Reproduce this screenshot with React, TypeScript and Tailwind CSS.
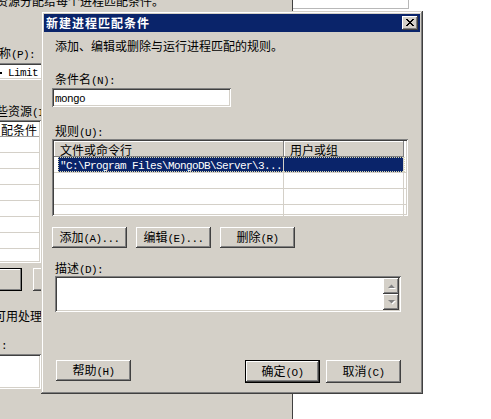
import React from "react";

const raised =
  "shadow-[inset_-1px_-1px_#404040,inset_1px_1px_#ffffff,inset_-2px_-2px_#808080,inset_2px_2px_#d4d0c8]";
const sunken =
  "shadow-[inset_1px_1px_#808080,inset_-1px_-1px_#ffffff,inset_2px_2px_#404040,inset_-2px_-2px_#d4d0c8]";
const winFrame =
  "shadow-[inset_-1px_-1px_#404040,inset_1px_1px_#d4d0c8,inset_-2px_-2px_#808080,inset_2px_2px_#ffffff]";

// SimSun-like mix: CJK at 12px, latin half-width at 6px per char
function T({ s, className = "" }: { s: string; className?: string }) {
  const parts = s.match(/[\x00-\x7f]+|[^\x00-\x7f]+/g) ?? [];
  return (
    <span className={`whitespace-pre leading-[12px] ${className}`}>
      {parts.map((p, i) =>
        /^[\x00-\x7f]/.test(p) ? (
          <span key={i} className="font-['Liberation_Mono',monospace] text-[11px] tracking-[-0.6px]">
            {p}
          </span>
        ) : (
          <span key={i} className="font-['Noto_Sans_CJK_SC',sans-serif] text-[12px]">
            {p}
          </span>
        )
      )}
    </span>
  );
}

function Btn({ label, w = 75, h = 21, def = false }: { label: string; w?: number; h?: number; def?: boolean }) {
  return (
    <div
      style={{ width: w, height: h }}
      className={`flex items-center justify-center bg-[#d4d0c8] ${
        def
          ? "shadow-[inset_0_0_0_1px_#000000,inset_-2px_-2px_#404040,inset_2px_2px_#ffffff,inset_-3px_-3px_#808080]"
          : raised
      }`}
    >
      <T s={label} />
    </div>
  );
}

function ListRow({ sel = false, text = "" }: { sel?: boolean; text?: string }) {
  return (
    <div className="relative flex h-[16px] shrink-0 border-b border-[#d4d0c8]">
      <div className="w-[230px] h-full border-r border-[#d4d0c8] pl-[4px]">
        {sel && (
          <div className="h-full bg-[#0a246a] text-white pl-[2px] flex items-center overflow-hidden">
            <T s={text} />
          </div>
        )}
      </div>
      <div className={`w-[120px] h-full border-r border-[#d4d0c8] ${sel ? "bg-[#0a246a]" : ""}`} />
      {sel && <div className="absolute left-[4px] top-0 w-[347px] h-[15px] border border-dotted border-[#d8d8b0]" />}
    </div>
  );
}

function ScrollBtn({ up }: { up: boolean }) {
  return (
    <div className={`w-[16px] h-[16px] bg-[#d4d0c8] ${raised} flex items-center justify-center`}>
      <svg width="9" height="6" viewBox="0 0 9 6">
        {up ? (
          <>
            <path d="M1 5h7L4.5 1.5z" fill="#ffffff" transform="translate(1 1)" />
            <path d="M1 5h7L4.5 1.5z" fill="#808080" />
          </>
        ) : (
          <>
            <path d="M1 1h7L4.5 4.5z" fill="#ffffff" transform="translate(1 1)" />
            <path d="M1 1h7L4.5 4.5z" fill="#808080" />
          </>
        )}
      </svg>
    </div>
  );
}

function CloseBtn() {
  return (
    <div className={`w-[16px] h-[14px] bg-[#d4d0c8] ${raised} flex items-center justify-center pb-[1px]`}>
      <svg width="8" height="7" viewBox="0 0 8 7" shapeRendering="crispEdges">
        <path
          d="M0 0h2v1H0zM6 0h2v1H6zM1 1h2v1H1zM5 1h2v1H5zM2 2h4v1H2zM3 3h2v1H3zM2 4h4v1H2zM1 5h2v1H1zM5 5h2v1H5zM0 6h2v1H0zM6 6h2v1H6z"
          fill="#000000"
        />
      </svg>
    </div>
  );
}

function ParentWindow() {
  return (
    <div className="absolute left-0 top-0 w-[293px] h-[419px] bg-[#d4d0c8] border-r border-[#404040] flex flex-col overflow-hidden">
      <div className="mt-[-6px] ml-[-4px] h-[12px] whitespace-nowrap">
        <T s="资源分配给每个进程匹配条件。" />
      </div>
      <div className="mt-[40px] ml-[-1px] h-[12px]">
        <T s="称(P):" />
      </div>
      <div className={`mt-[5px] ml-[-20px] w-[80px] h-[17px] bg-white ${sunken} flex items-center pl-[20px]`}>
        <span className="w-[2px] h-[2px] bg-black mr-[6px] mt-[3px] shrink-0" />
        <T s="Limit" />
      </div>
      <div className="mt-[24px] ml-[-4px] h-[12px] whitespace-nowrap">
        <T s="些资源(I" />
      </div>
      <div className={`mt-[4px] ml-[-20px] w-[61px] h-[143px] bg-white ${sunken} p-[2px] flex flex-col`}>
        <div className="h-[15px] shrink-0 border-b border-[#a0a0a0] pl-[19px] flex items-center">
          <T s="配条件" />
        </div>
        {Array.from({ length: 8 }).map((_, i) => (
          <div key={i} className="h-[16px] shrink-0 border-b border-[#d4d0c8]" />
        ))}
      </div>
      <div className="mt-[5px] ml-[-58px] flex gap-[11px]">
        <div className="w-[80px] h-[23px] bg-[#d4d0c8] shadow-[inset_0_0_0_1px_#000000,inset_-2px_-2px_#808080,inset_2px_2px_#ffffff]" />
        <div className={`w-[80px] h-[23px] bg-[#d4d0c8] ${raised}`} />
      </div>
      <div className="mt-[18px] ml-[-6px] h-[12px] whitespace-nowrap">
        <T s="有可用处理" className="ml-[-12px]" />
      </div>
      <div className="mt-[16px] ml-[1px] h-[12px]">
        <T s=":" />
      </div>
      <div className={`mt-[5px] ml-[-20px] w-[61px] h-[35px] bg-white ${sunken}`} />
    </div>
  );
}

export default function App() {
  return (
    <div className="relative w-[491px] h-[419px] overflow-hidden bg-white text-black leading-[12px]">
      <ParentWindow />
      <div className="absolute left-[293px] top-0 w-[116px] h-[9px] border-b border-r border-[#b8b8b8]" />

      <div className={`absolute left-[41px] top-[11px] w-[382px] h-[383px] p-[3px] bg-[#d4d0c8] ${winFrame} flex flex-col`}>
        <div className="h-[18px] shrink-0 bg-[#0a246a] flex items-center justify-between pl-[2px] pr-[2px]">
          <span className="text-white font-bold font-['Noto_Sans_CJK_SC',sans-serif] text-[12px] tracking-[1px] leading-[12px]">
            新建进程匹配条件
          </span>
          <CloseBtn />
        </div>

        <div className="mt-[7px] ml-[11px] h-[12px]">
          <T s="添加、编辑或删除与运行进程匹配的规则。" />
        </div>

        <div className="mt-[21px] ml-[11px] h-[12px]">
          <T s="条件名(N):" />
        </div>
        <div className={`mt-[4px] ml-[8px] w-[179px] h-[19px] shrink-0 bg-white ${sunken} flex items-center pl-[3px]`}>
          <T s="mongo" />
        </div>

        <div className="mt-[17px] ml-[11px] h-[12px]">
          <T s="规则(U):" />
        </div>
        <div className={`mt-[3px] ml-[8px] w-[356px] h-[77px] shrink-0 bg-white ${sunken} p-[2px] flex flex-col overflow-hidden`}>
          <div className="flex h-[16px] shrink-0">
            <div className="w-[230px] h-full bg-[#d4d0c8] shadow-[inset_-1px_-1px_#808080,inset_1px_1px_#ffffff] pl-[6px] flex items-center">
              <T s="文件或命令行" />
            </div>
            <div className="w-[120px] h-full bg-[#d4d0c8] shadow-[inset_-1px_-1px_#808080,inset_1px_1px_#ffffff] pl-[6px] flex items-center">
              <T s="用户或组" />
            </div>
          </div>
          <ListRow sel text={'"C:\\Program Files\\MongoDB\\Server\\3...'} />
          <ListRow />
          <ListRow />
          <ListRow />
        </div>

        <div className="mt-[11px] ml-[8px] flex gap-[9px]">
          <Btn label="添加(A)..." />
          <Btn label="编辑(E)..." />
          <Btn label="删除(R)" />
        </div>

        <div className="mt-[13px] ml-[11px] h-[12px]">
          <T s="描述(D):" />
        </div>
        <div className={`mt-[3px] ml-[11px] w-[346px] h-[36px] shrink-0 bg-white ${sunken} p-[2px] flex justify-end`}>
          <div className="flex flex-col">
            <ScrollBtn up />
            <ScrollBtn up={false} />
          </div>
        </div>

        <div className="mt-[48px] ml-[12px] mr-[19px] flex items-start justify-between">
          <Btn label="帮助(H)" />
          <div className="flex gap-[6px]">
            <Btn label="确定(O)" h={23} def />
            <Btn label="取消(C)" h={23} />
          </div>
        </div>
      </div>
    </div>
  );
}
